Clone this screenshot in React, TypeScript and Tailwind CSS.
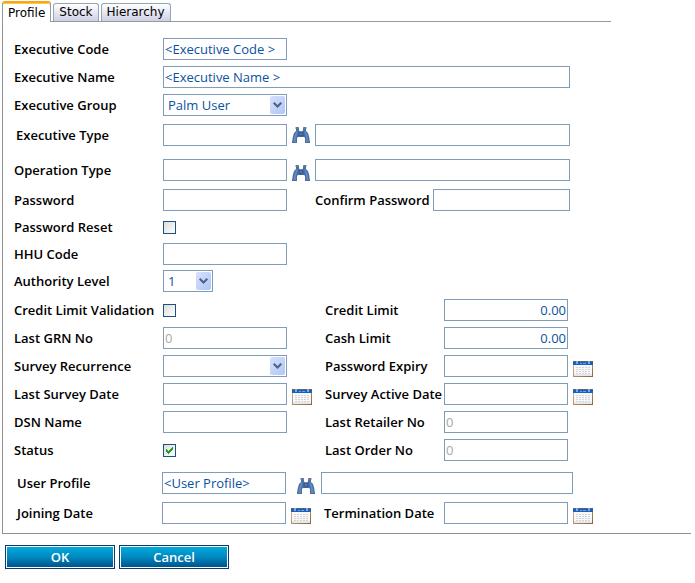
import { useId, type ReactNode } from "react";

const fieldBase =
  "h-[22px] min-w-0 border border-[#7f9db9] bg-white text-[13px] leading-5 text-[#0a52a0] outline-none disabled:text-[#aca899]";

function Label({ htmlFor, className = "", children }: { htmlFor: string; className?: string; children: ReactNode }) {
  return (
    <label htmlFor={htmlFor} className={`shrink-0 whitespace-nowrap text-[13px] leading-[22px] font-semibold text-black ${className}`}>
      {children}
    </label>
  );
}

type TextProps = {
  id: string;
  value?: string;
  type?: string;
  className?: string;
  disabled?: boolean;
  label?: string;
};

function Text({ id, value = "", type = "text", className = "w-[124px]", disabled, label }: TextProps) {
  return (
    <input
      id={id}
      type={type}
      defaultValue={value}
      disabled={disabled}
      aria-label={label}
      className={`${fieldBase} px-px ${className}`}
    />
  );
}

function Select({ id, options, className }: { id: string; options: string[]; className: string }) {
  return (
    <div className={`relative ${className}`}>
      <select id={id} className={`${fieldBase} block w-full appearance-none pl-1 pr-5`}>
        {options.map((o) => (
          <option key={o}>{o}</option>
        ))}
      </select>
      <span className="pointer-events-none absolute right-0.5 top-0.5 flex h-[18px] w-[15px] items-center justify-center rounded-xs bg-linear-to-br from-[#d6e1fc] to-[#b0c6f6]">
        <svg width="9" height="6" viewBox="0 0 9 6" fill="none" stroke="#4d6185" strokeWidth="2">
          <path d="M0.7 0.8 4.5 4.5 8.3 0.8" />
        </svg>
      </span>
    </div>
  );
}

function Check({ id, checked = false }: { id: string; checked?: boolean }) {
  return (
    <span className="relative flex size-[13px]">
      <input
        id={id}
        type="checkbox"
        defaultChecked={checked}
        className="peer size-[13px] appearance-none border border-[#1c5180] bg-linear-to-br from-[#dcdcd7] to-white"
      />
      <svg
        className="pointer-events-none absolute left-[3px] top-[3px] hidden peer-checked:block"
        width="7"
        height="7"
        viewBox="0 0 7 7"
        fill="#21a121"
      >
        <path d="M0 2h1v1h1v1h1V3h1V2h1V1h1V0h1v3H6v1H5v1H4v1H3v1H2V6H1V5H0z" />
      </svg>
    </span>
  );
}

function Binoculars() {
  return (
    <svg width="18" height="16" viewBox="0 0 18 16">
      <path d="M4 1h3v2.5l1 1h2l1-1V1h3v3l2 2 1.2 4 .8 6h-5v-5l-1-1H6l-1 1v5H0l.8-6L2 6l2-2z" fill="#4a70a8" />
      <path d="M3.6 0h3.2v2H3.6zM11.2 0h3.2v2h-3.2z" fill="#60789c" />
      <path d="M4.4 4.4h1.4L4.2 9.4 3.6 14H1.8l.6-4.4zM12.4 4.4h1.4l1.8 5.2.6 4.4h-1.8l-.6-4.6z" fill="#628cc6" />
      <path d="M6.6 4.6h4.8v4.8H6.6z" fill="#395989" />
      <path d="M7.8 5.8h2.4v2.2H7.8z" fill="#5379b2" />
      <path d="M0 14h5v2H0zM13 14h5v2h-5z" fill="#536c90" />
      <path d="M1.4 14.2h2.4v.9H1.4zM14.2 14.2h2.4v.9h-2.4z" fill="#7c94b8" />
    </svg>
  );
}

function Calendar() {
  const g = useId();
  return (
    <svg width="20" height="16" viewBox="0 0 20 16" shapeRendering="crispEdges">
      <defs>
        <linearGradient id={g} x1="0" y1="0" x2="1" y2="1">
          <stop offset="0" stopColor="#d9bd95" />
          <stop offset="1" stopColor="#8c6238" />
        </linearGradient>
      </defs>
      <path d="M0 0h20v16H0z" fill={`url(#${g})`} />
      <path d="M1 4h18v11H1z" fill="#f8f8f8" />
      <path d="M1 13h18v2H1z" fill="#e6e8ec" />
      <path d="M0 0h20v1H0z" fill="#5f6468" />
      <path d="M0 1h20v3H0z" fill="#1560c0" />
      <path d="M3 0h2v3H3zM15 0h2v3h-2z" fill="#7fa6d8" />
      <path d="M7 2h6v1H7z" fill="#6ea0e2" />
      <path d="M9 2h1v1H9z" fill="#1560c0" />
      <path d="M3 6.5h14M3 8.5h14M3 10.5h14M3 12.5h14" stroke="#d2d4d8" strokeDasharray="2 1" />
    </svg>
  );
}

function IconButton({ label, className = "", children }: { label: string; className?: string; children: ReactNode }) {
  return (
    <button type="button" aria-label={label} className={`block shrink-0 cursor-pointer ${className}`}>
      {children}
    </button>
  );
}

function Tab({ active = false, children }: { active?: boolean; children: ReactNode }) {
  return (
    <button
      type="button"
      role="tab"
      aria-selected={active}
      className={
        active
          ? "-mb-px h-[21px] rounded-t-[3px] border-x border-t-2 border-x-[#919b9c] border-t-[#f5a623] bg-white px-[5px] text-[12px] leading-[18px] shadow-[inset_0_1px_0_#ffc83c]"
          : "h-[18px] rounded-t-[3px] border border-b-0 border-[#91a7b4] bg-linear-to-b from-white to-[#cfcfe6] px-[5px] text-[12px] leading-[17px]"
      }
    >
      {children}
    </button>
  );
}

/* A line of the form with a left and a right half. */
function Pair({ left, right }: { left: ReactNode; right?: ReactNode }) {
  return (
    <div className="flex h-[22px]">
      <div className="flex w-[311px] shrink-0 items-center">{left}</div>
      {right && <div className="flex items-center">{right}</div>}
    </div>
  );
}

export default function App() {
  const p = useId();
  const id = (name: string) => `${p}-${name}`;
  const l = "w-[149px]";
  const r = "w-[119px]";
  const end = "ml-[5px] self-end";

  return (
    <form className="bg-white pt-px pl-0.5 pr-1 pb-3 font-['Open_Sans',sans-serif] text-black" onSubmit={(e) => e.preventDefault()}>
      <div role="tablist" className="flex h-[21px] w-[609px] max-w-full items-end gap-0.5 border-b border-[#919b9c] font-['DejaVu_Sans',sans-serif]">
        <Tab active>Profile</Tab>
        <Tab>Stock</Tab>
        <Tab>Hierarchy</Tab>
      </div>

      <div className="border-b border-l border-[#919191] pt-4 pb-[9px] pl-[11px]">
        <div className="flex flex-col gap-1.5">
          <div className="flex">
            <Label htmlFor={id("code")} className={l}>Executive Code</Label>
            <Text id={id("code")} value="<Executive Code >" />
          </div>
          <div className="flex">
            <Label htmlFor={id("name")} className={l}>Executive Name</Label>
            <Text id={id("name")} value="<Executive Name >" className="w-[407px]" />
          </div>
          <div className="flex">
            <Label htmlFor={id("group")} className={l}>Executive Group</Label>
            <Select id={id("group")} options={["Palm User"]} className="w-[124px]" />
          </div>
        </div>

        <div className="mt-2 flex flex-col gap-[13px]">
          <div className="flex items-center">
            <Label htmlFor={id("type")} className="w-[149px] pl-0.5">Executive Type</Label>
            <Text id={id("type")} />
            <IconButton label="Find executive type" className="mx-[5px]"><Binoculars /></IconButton>
            <Text id={id("typeName")} label="Executive type name" className="w-[255px]" />
          </div>
          <div className="flex items-center">
            <Label htmlFor={id("op")} className={l}>Operation Type</Label>
            <Text id={id("op")} />
            <IconButton label="Find operation type" className="mx-[5px] self-end"><Binoculars /></IconButton>
            <Text id={id("opName")} label="Operation type name" className="w-[255px]" />
          </div>
        </div>

        <div className="mt-2 flex flex-col gap-[5px]">
          <div className="flex">
            <Label htmlFor={id("pw")} className={l}>Password</Label>
            <Text id={id("pw")} type="password" />
            <Label htmlFor={id("pw2")} className="ml-7 w-[118px]">Confirm Password</Label>
            <Text id={id("pw2")} type="password" className="w-[137px]" />
          </div>
          <div className="flex items-center">
            <Label htmlFor={id("reset")} className={l}>Password Reset</Label>
            <Check id={id("reset")} />
          </div>
          <div className="flex">
            <Label htmlFor={id("hhu")} className={l}>HHU Code</Label>
            <Text id={id("hhu")} />
          </div>
          <div className="flex">
            <Label htmlFor={id("auth")} className={l}>Authority Level</Label>
            <Select id={id("auth")} options={["1"]} className="w-[50px]" />
          </div>
        </div>

        <div className="mt-[7px] flex flex-col gap-1.5">
          <Pair
            left={<><Label htmlFor={id("clv")} className={l}>Credit Limit Validation</Label><Check id={id("clv")} /></>}
            right={<><Label htmlFor={id("credit")} className={r}>Credit Limit</Label><Text id={id("credit")} value="0.00" className="w-[124px] text-right" /></>}
          />
          <Pair
            left={<><Label htmlFor={id("grn")} className={l}>Last GRN No</Label><Text id={id("grn")} value="0" disabled /></>}
            right={<><Label htmlFor={id("cash")} className={r}>Cash Limit</Label><Text id={id("cash")} value="0.00" className="w-[124px] text-right" /></>}
          />
          <Pair
            left={<><Label htmlFor={id("rec")} className={l}>Survey Recurrence</Label><Select id={id("rec")} options={[""]} className="w-[124px]" /></>}
            right={<><Label htmlFor={id("exp")} className={r}>Password Expiry</Label><Text id={id("exp")} /><IconButton label="Pick password expiry" className={end}><Calendar /></IconButton></>}
          />
          <Pair
            left={<><Label htmlFor={id("lsd")} className={l}>Last Survey Date</Label><Text id={id("lsd")} /><IconButton label="Pick last survey date" className={end}><Calendar /></IconButton></>}
            right={<><Label htmlFor={id("sad")} className={r}>Survey Active Date</Label><Text id={id("sad")} /><IconButton label="Pick survey active date" className={end}><Calendar /></IconButton></>}
          />
          <Pair
            left={<><Label htmlFor={id("dsn")} className={l}>DSN Name</Label><Text id={id("dsn")} /></>}
            right={<><Label htmlFor={id("lrn")} className={r}>Last Retailer No</Label><Text id={id("lrn")} value="0" disabled /></>}
          />
          <Pair
            left={<><Label htmlFor={id("status")} className={l}>Status</Label><Check id={id("status")} checked /></>}
            right={<><Label htmlFor={id("lon")} className={r}>Last Order No</Label><Text id={id("lon")} value="0" disabled /></>}
          />
        </div>

        <div className="mt-[11px] flex flex-col gap-2 pl-[3px]">
          <div className="flex">
            <Label htmlFor={id("profile")} className="w-[145px]">User Profile</Label>
            <Text id={id("profile")} value="<User Profile>" />
            <IconButton label="Find user profile" className="ml-[11px] mr-1.5 self-end"><Binoculars /></IconButton>
            <Text id={id("profileName")} label="User profile name" className="w-[252px]" />
          </div>
          <div className="flex">
            <Label htmlFor={id("join")} className="w-[145px]">Joining Date</Label>
            <Text id={id("join")} />
            <IconButton label="Pick joining date" className={end}><Calendar /></IconButton>
            <Label htmlFor={id("term")} className="ml-[13px] w-[120px]">Termination Date</Label>
            <Text id={id("term")} />
            <IconButton label="Pick termination date" className={end}><Calendar /></IconButton>
          </div>
        </div>
      </div>

      <div className="mt-[11px] flex gap-1 pl-[3px]">
        {["OK", "Cancel"].map((t) => (
          <button
            key={t}
            type="button"
            className="h-6 w-[110px] cursor-pointer border border-[#0b3a6b] bg-linear-to-b from-[#00aee0] via-[#0089c0] to-[#004f88] text-[13px] leading-5 font-semibold text-white shadow-[inset_0_0_0_1px_#fff]"
          >
            {t}
          </button>
        ))}
      </div>
    </form>
  );
}
